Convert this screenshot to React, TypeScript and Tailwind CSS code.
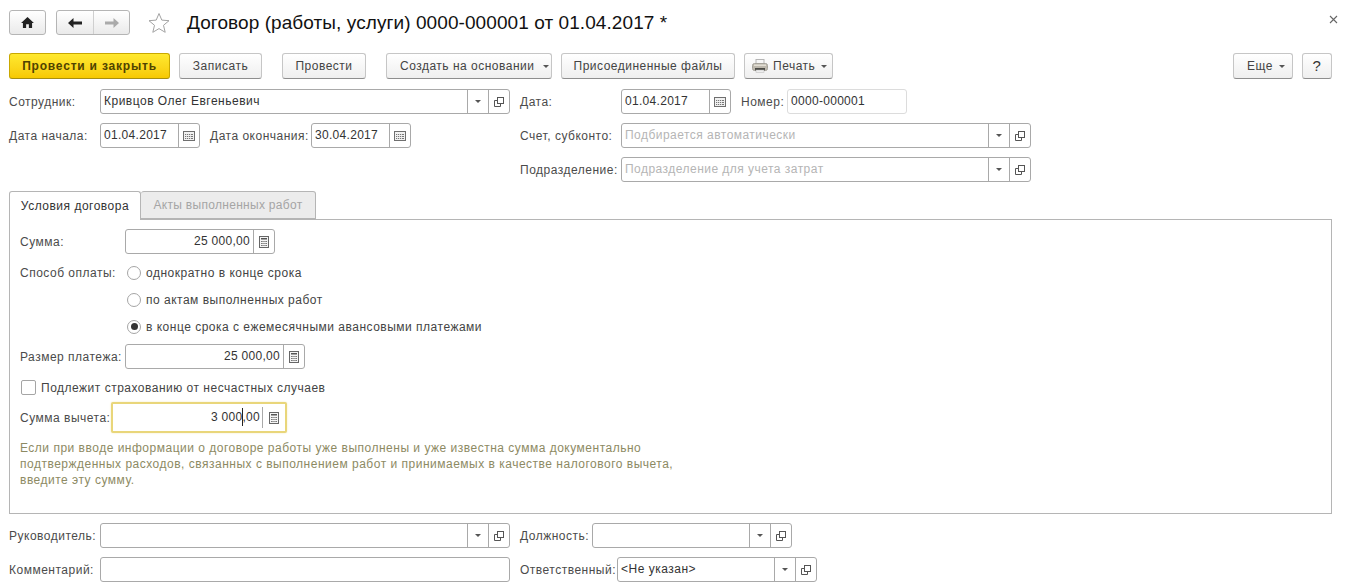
import type { ReactNode } from "react";

const arial = "font-['Liberation_Sans',Arial,sans-serif]";

function Caret({ color = "#555" }: { color?: string }) {
    return (
        <svg width="6" height="3" viewBox="0 0 6 3" className="shrink-0">
            <path d="M0 0h6L3 3z" fill={color} />
        </svg>
    );
}

function OpenIcon() {
    return (
        <svg width="10" height="10" viewBox="0 0 10 10" fill="none" stroke="#555" strokeWidth="1">
            <rect x="3.5" y="0.5" width="6" height="6" fill="#fff" />
            <path d="M3.5 3.5H0.5V9.5H6.5V6.5" />
        </svg>
    );
}

function DateIcon() {
    return (
        <svg width="12" height="10" viewBox="0 0 12 10">
            <rect x="0.5" y="0.5" width="11" height="9" fill="#f1f1f1" stroke="#6f6f6f" />
            <path d="M2 3h8v1H2zM2 5h8v1H2zM2 7h8v1H2z" fill="#777" />
            <path d="M3.5 2.5v5.5M5.5 2.5v5.5M7.5 2.5v5.5" stroke="#f1f1f1" strokeWidth="0.8" />
        </svg>
    );
}

function CalcIcon() {
    return (
        <svg width="10" height="12" viewBox="0 0 10 12">
            <rect x="0.5" y="0.5" width="9" height="11" fill="#f5f5f5" stroke="#666" />
            <rect x="2" y="2" width="6" height="1.5" fill="#555" />
            <path d="M2 5h6v1H2zM2 7h6v1H2zM2 9h6v1H2z" fill="#777" />
            <path d="M4 4.5v6M6 4.5v6" stroke="#f5f5f5" strokeWidth="0.6" />
        </svg>
    );
}

function Btn({ w, children, yellow, left }: { w: number; children: ReactNode; yellow?: boolean; left?: boolean }) {
    return (
        <div
            style={{ width: w }}
            className={
                yellow
                    ? "h-[26px] shrink-0 flex items-center justify-center rounded-[3px] border border-[#c9a800] border-b-[#a88f10] bg-gradient-to-b from-[#ffe92e] to-[#f7c900] font-bold tracking-[0.8px] text-[#4f4300]"
                    : `h-[26px] shrink-0 flex items-center rounded-[3px] border border-[#c6c6c6] border-b-[#8e8e8e] bg-gradient-to-b from-white to-[#efefef] text-[#444] ${left ? "justify-start" : "justify-center"}`
            }
        >
            {children}
        </div>
    );
}

type FieldProps = {
    w: number;
    text?: string;
    placeholder?: string;
    right?: boolean;
    num?: boolean;
    select?: boolean;
    open?: boolean;
    date?: boolean;
    calc?: boolean;
    light?: boolean;
};

function Field({ w, text, placeholder, right, num, select, open, date, calc, light }: FieldProps) {
    const cell = "h-full w-[21px] shrink-0 flex items-center justify-center border-l border-[#a9a9a9]";
    return (
        <div
            style={{ width: w }}
            className={`h-[25px] shrink-0 flex rounded-[3px] border bg-white ${light ? "border-[#dcdcdc]" : "border-[#a9a9a9]"}`}
        >
            <div
                className={`flex-1 min-w-0 px-[3px] leading-[23px] whitespace-nowrap text-[#333] ${right ? "text-right" : ""} ${num ? "tracking-[0.3px]" : ""}`}
            >
                {text}
                {placeholder && <span className="tracking-[0.47px] text-[#b5b5b5]">{placeholder}</span>}
            </div>
            {select && (
                <div className={cell}>
                    <Caret />
                </div>
            )}
            {open && (
                <div className={cell}>
                    <OpenIcon />
                </div>
            )}
            {date && (
                <div className={cell}>
                    <DateIcon />
                </div>
            )}
            {calc && (
                <div className={cell}>
                    <CalcIcon />
                </div>
            )}
        </div>
    );
}

function Label({ w, children }: { w: number; children: ReactNode }) {
    return (
        <div style={{ width: w }} className="shrink-0 whitespace-nowrap text-[#4b4b4b]">
            {children}
        </div>
    );
}

function Radio({ text, on }: { text: string; on?: boolean }) {
    return (
        <div className="h-[15px] flex items-center gap-[5px] pl-[107px] text-[#444]">
            <div className="w-[14px] h-[14px] shrink-0 flex items-center justify-center rounded-full border border-[#a5a5a5] bg-white">
                {on && <div className="w-[7px] h-[7px] rounded-full bg-[#333]" />}
            </div>
            <span className="whitespace-nowrap">{text}</span>
        </div>
    );
}

export default function App() {
    return (
        <div className={`w-[1349px] h-[583px] overflow-hidden bg-white pl-[9px] pt-[10px] text-[12px] tracking-[0.5px] ${arial}`}>
            {/* заголовок */}
            <div className="h-[25px] w-[1329px] flex items-center">
                <div className="w-[37px] h-[25px] shrink-0 flex items-center justify-center rounded-[3px] border border-[#b5b5b5] bg-gradient-to-b from-white to-[#eaeaea]">
                    <svg width="13" height="11" viewBox="0 0 14 12">
                        <path d="M7 0L14 6.5H12V12H8.5V8H5.5V12H2V6.5H0z" fill="#222" />
                    </svg>
                </div>
                <div className="ml-[10px] w-[74px] h-[25px] shrink-0 flex rounded-[3px] border border-[#b5b5b5] bg-gradient-to-b from-white to-[#eaeaea]">
                    <div className="w-[37px] flex items-center justify-center border-r border-[#cfcfcf]">
                        <svg width="14" height="10" viewBox="0 0 14 10">
                            <path d="M0 5L5.5 0V3.5H14V6.5H5.5V10z" fill="#222" />
                        </svg>
                    </div>
                    <div className="flex-1 flex items-center justify-center">
                        <svg width="14" height="10" viewBox="0 0 14 10">
                            <path d="M14 5L8.5 0V3.5H0V6.5H8.5V10z" fill="#aaa" />
                        </svg>
                    </div>
                </div>
                <svg width="22" height="21" viewBox="0 0 22 21" className="ml-[18px] shrink-0" fill="none" stroke="#a3a3a3">
                    <path d="M11 1.5l2.8 6.6 7.2.6-5.5 4.6 1.7 7-6.2-3.7-6.2 3.7 1.7-7L1 8.7l7.2-.6z" />
                </svg>
                <div className="ml-[17px] text-[19px] tracking-[0.08px] leading-[25px] text-[#111] whitespace-nowrap">
                    Договор (работы, услуги) 0000-000001 от 01.04.2017 *
                </div>
                <svg width="9" height="9" viewBox="0 0 9 9" className="ml-auto -mt-[6px] shrink-0" stroke="#666" strokeWidth="1.1">
                    <path d="M1 1l7 7M8 1L1 8" />
                </svg>
            </div>

            {/* командная панель */}
            <div className="mt-[18px] w-[1323px] flex">
                <Btn w={161} yellow>Провести и закрыть</Btn>
                <div className="ml-[9px]"><Btn w={83}>Записать</Btn></div>
                <div className="ml-[20px]"><Btn w={84}>Провести</Btn></div>
                <div className="ml-[20px]">
                    <Btn w={166} left>
                        <span className="ml-[13px] mr-[8px]">Создать на основании</span>
                        <Caret />
                    </Btn>
                </div>
                <div className="ml-[9px]"><Btn w={174}>Присоединенные файлы</Btn></div>
                <div className="ml-[9px]">
                    <Btn w={89} left>
                        <svg width="16" height="14" viewBox="0 0 16 14" className="ml-[7px] mr-[5px] shrink-0">
                            <rect x="4" y="0.5" width="8" height="5" fill="#f7f7f7" stroke="#b5b5b5" />
                            <rect x="0.5" y="4.5" width="15" height="7" rx="2" fill="#bdb8ad" stroke="#a5a29a" />
                            <rect x="2" y="5.5" width="12" height="1.5" fill="#e2ded4" />
                            <rect x="3" y="9" width="10" height="2.5" fill="#4a4a45" />
                            <rect x="4" y="11" width="8" height="2.5" fill="#eee" stroke="#b5b5b5" strokeWidth="0.5" />
                        </svg>
                        <span className="mr-[6px]">Печать</span>
                        <Caret />
                    </Btn>
                </div>
                <div className="ml-auto">
                    <Btn w={60} left>
                        <span className="ml-[13px] mr-[6px]">Еще</span>
                        <Caret />
                    </Btn>
                </div>
                <div className="ml-[9px]"><Btn w={30}><span className="text-[15px] text-[#333]">?</span></Btn></div>
            </div>

            {/* шапка документа */}
            <div className="mt-[10px] h-[93px] flex">
                <div className="w-[511px] shrink-0 flex flex-col gap-[9px]">
                    <div className="flex items-center">
                        <Label w={91}>Сотрудник:</Label>
                        <Field w={410} text="Кривцов Олег Евгеньевич" select open />
                    </div>
                    <div className="flex items-center">
                        <Label w={91}>Дата начала:</Label>
                        <Field w={100} text="01.04.2017" num date />
                        <div className="ml-[10px]"><Label w={101}>Дата окончания:</Label></div>
                        <Field w={100} text="30.04.2017" num date />
                    </div>
                </div>
                <div className="flex flex-col gap-[9px]">
                    <div className="flex items-center">
                        <Label w={101}>Дата:</Label>
                        <Field w={110} text="01.04.2017" num date />
                        <div className="ml-[10px]"><Label w={46}>Номер:</Label></div>
                        <Field w={120} text="0000-000001" num light />
                    </div>
                    <div className="flex items-center">
                        <Label w={101}>Счет, субконто:</Label>
                        <Field w={410} placeholder="Подбирается автоматически" select open />
                    </div>
                    <div className="flex items-center">
                        <Label w={101}>Подразделение:</Label>
                        <Field w={410} placeholder="Подразделение для учета затрат" select open />
                    </div>
                </div>
            </div>

            {/* вкладки */}
            <div className="mt-[9px] h-[29px] w-[1323px] flex">
                <div className="w-[132px] h-[29px] relative z-10 flex items-center justify-center rounded-t-[3px] border border-b-0 border-[#b5b5b5] bg-white text-[#333]">
                    Условия договора
                </div>
                <div className="w-[175px] h-[28px] flex items-center justify-center rounded-t-[3px] border border-l-0 border-[#b5b5b5] bg-[#ececec] tracking-[0.3px] text-[#a5a5a5]">
                    Акты выполненных работ
                </div>
            </div>
            <div className="-mt-px w-[1323px] h-[295px] border border-[#b5b5b5] pl-[10px] pt-[9px]">
                <div className="flex items-center">
                    <Label w={105}>Сумма:</Label>
                    <Field w={150} text="25 000,00" num right calc />
                </div>
                <div className="mt-[11px] relative">
                    <div className="absolute left-0 -top-[1px] text-[#4b4b4b]">Способ оплаты:</div>
                    <div className="flex flex-col gap-[12px]">
                        <Radio text="однократно в конце срока" />
                        <Radio text="по актам выполненных работ" />
                        <Radio text="в конце срока с ежемесячными авансовыми платежами" on />
                    </div>
                </div>
                <div className="mt-[10px] flex items-center">
                    <Label w={105}>Размер платежа:</Label>
                    <Field w={180} text="25 000,00" num right calc />
                </div>
                <div className="mt-[11px] h-[15px] flex items-center gap-[5px] text-[#444]">
                    <div className="ml-px w-[15px] h-[15px] rounded-[2px] border border-[#a5a5a5] bg-white" />
                    <span>Подлежит страхованию от несчастных случаев</span>
                </div>
                <div className="mt-[7px] flex items-center">
                    <Label w={91}>Сумма вычета:</Label>
                    <div className="w-[176px] h-[31px] flex rounded-[2px] border-2 border-[#e9d67a] bg-white shadow-[0_0_2px_#f3e9b5]">
                        <div className="relative flex-1 pr-[2px] leading-[27px] text-right tracking-[0.3px] text-[#333]">
                            3 000,00
                            <div className="absolute right-[19px] top-[4px] h-[18px] w-px bg-[#222]" />
                        </div>
                        <div className="my-[3px] w-[23px] flex items-center justify-center border-l border-[#a9a9a9]">
                            <CalcIcon />
                        </div>
                    </div>
                </div>
                <div className="mt-[7px] w-[700px] leading-[16px] text-[#8d8a63]">
                    Если при вводе информации о договоре работы уже выполнены и уже известна сумма документально
                    <br />
                    подтвержденных расходов, связанных с выполнением работ и принимаемых в качестве налогового вычета,
                    <br />
                    введите эту сумму.
                </div>
            </div>

            {/* подвал */}
            <div className="mt-[9px] flex flex-col gap-[9px]">
                <div className="flex items-center">
                    <Label w={91}>Руководитель:</Label>
                    <Field w={410} select open />
                    <div className="ml-[10px]"><Label w={72}>Должность:</Label></div>
                    <Field w={200} select open />
                </div>
                <div className="flex items-center">
                    <Label w={91}>Комментарий:</Label>
                    <Field w={410} />
                    <div className="ml-[10px]"><Label w={97}>Ответственный:</Label></div>
                    <Field w={200} text="<Не указан>" select open />
                </div>
            </div>
        </div>
    );
}
